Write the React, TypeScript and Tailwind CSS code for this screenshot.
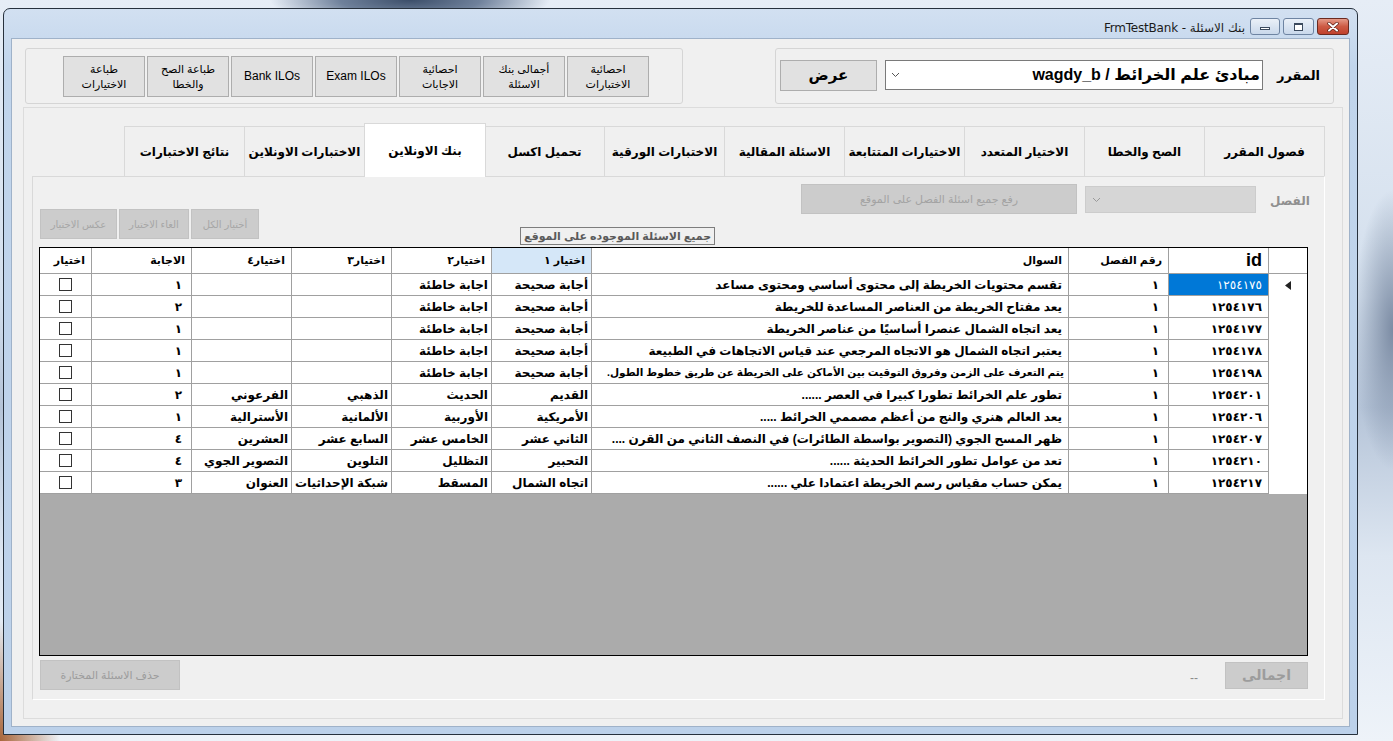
const toAr = (v: number | string) => String(v).replace(/[0-9]/g, (d) => '٠١٢٣٤٥٦٧٨٩'[Number(d)]);

type Row = { id: number; q: string; c: string[]; a: number };

const rows: Row[] = [
  { id: 1254175, q: 'تقسم محتويات الخريطة إلى محتوى أساسي ومحتوى مساعد', c: ['أجابة صحيحة', 'اجابة خاطئة', '', ''], a: 1 },
  { id: 1254176, q: 'يعد مفتاح الخريطة من العناصر المساعدة للخريطة', c: ['أجابة صحيحة', 'اجابة خاطئة', '', ''], a: 2 },
  { id: 1254177, q: 'يعد اتجاه الشمال عنصرا أساسيًا من عناصر الخريطة', c: ['أجابة صحيحة', 'اجابة خاطئة', '', ''], a: 1 },
  { id: 1254178, q: 'يعتبر اتجاه الشمال هو الاتجاه المرجعي عند قياس الاتجاهات في الطبيعة', c: ['أجابة صحيحة', 'اجابة خاطئة', '', ''], a: 1 },
  { id: 1254198, q: 'يتم التعرف على الزمن وفروق التوقيت بين الأماكن على الخريطة عن طريق خطوط الطول.', c: ['أجابة صحيحة', 'اجابة خاطئة', '', ''], a: 1 },
  { id: 1254201, q: 'تطور علم الخرائط تطورا كبيرا في العصر ......', c: ['القديم', 'الحديث', 'الذهبي', 'الفرعوني'], a: 2 },
  { id: 1254206, q: 'يعد العالم هنري والنج من أعظم مصممي الخرائط .....', c: ['الأمريكية', 'الأوربية', 'الألمانية', 'الأسترالية'], a: 1 },
  { id: 1254207, q: 'ظهر المسح الجوي (التصوير بواسطة الطائرات) في النصف الثاني من القرن ....', c: ['الثاني عشر', 'الخامس عشر', 'السابع عشر', 'العشرين'], a: 4 },
  { id: 1254210, q: 'تعد من عوامل تطور الخرائط الحديثة ......', c: ['التحبير', 'التظليل', 'التلوين', 'التصوير الجوي'], a: 4 },
  { id: 1254217, q: 'يمكن حساب مقياس رسم الخريطة اعتمادا علي ......', c: ['اتجاه الشمال', 'المسقط', 'شبكة الإحداثيات', 'العنوان'], a: 3 },
];

const tabs = [
  'فصول المقرر',
  'الصح والخطا',
  'الاختيار المتعدد',
  'الاختيارات المتتابعة',
  'الاسئلة المقالية',
  'الاختبارات الورقية',
  'تحميل اكسل',
  'بنك الاونلاين',
  'الاختبارات الاونلاين',
  'نتائج الاختبارات',
];

const topButtons: string[][] = [
  ['طباعة', 'الاختيارات'],
  ['طباعة الصح', 'والخطا'],
  ['Bank ILOs'],
  ['Exam ILOs'],
  ['احصائية', 'الاجابات'],
  ['أجمالى بنك', 'الاسئلة'],
  ['احصائية', 'الاختبارات'],
];

const headers = ['', 'id', 'رقم الفصل', 'السوال', 'اختيار ١', 'اختيار٢', 'اختيار٣', 'اختيار٤', 'الاجابة', 'اختيار'];

function Cell({ children, last, className = '' }: { children?: React.ReactNode; last?: boolean; className?: string }) {
  return (
    <div
      className={`h-[22px] border-b border-[#a0a0a0] ${last ? '' : 'border-l'} flex items-center pr-[6px] pl-[1px] overflow-hidden whitespace-nowrap font-bold text-black ${className}`}
    >
      {children}
    </div>
  );
}

export default function App() {
  return (
    <div className="w-[1393px] h-[741px] overflow-hidden pt-[8px] pl-[3px] font-['Liberation_Sans','DejaVu_Sans',sans-serif] bg-[radial-gradient(ellipse_140px_28px_at_410px_0px,#3c4e69_0%,#6f819b_50%,transparent_100%),radial-gradient(ellipse_60px_120px_at_0px_741px,#a9663a_0%,transparent_100%),radial-gradient(ellipse_40px_140px_at_1393px_330px,#7c8ca4_0%,transparent_100%),linear-gradient(180deg,#e6edf6_0%,#d3dfed_40%,#b5c4d8_55%,#dde6f1_75%,#eef3f9_100%)]">
      {/* Window */}
      <div className="w-[1355px] h-[727px] border border-[#27313d] rounded-t-[7px] flex flex-col px-[7px] bg-[linear-gradient(180deg,#d2e0f1_0%,#c1d5ec_8%,#bcd1ea_100%)]">
        {/* Title bar */}
        <div className="h-[29px] flex items-start justify-end pt-[9px] pr-[1px]">
          <span dir="rtl" className="text-[12px] text-[#1b1b1b] mt-[1px] mr-[5px] font-['DejaVu_Sans',sans-serif] tracking-[-0.2px]">
            بنك الاسئلة - FrmTestBank
          </span>
          <div className="w-[30px] h-[17px] rounded-[3px] border border-[#6e84a2] bg-[linear-gradient(180deg,#eaf0f8,#c9d8eb)] flex items-end justify-center pb-[4px]">
            <div className="w-[10px] h-[3px] bg-white border border-[#3b4a5e]" />
          </div>
          <div className="ml-[3px] w-[31px] h-[17px] rounded-[3px] border border-[#6e84a2] bg-[linear-gradient(180deg,#eaf0f8,#c9d8eb)] flex items-center justify-center">
            <div className="w-[9px] h-[8px] bg-white border border-[#3b4a5e] border-t-2" />
          </div>
          <div className="ml-[3px] w-[32px] h-[17px] rounded-[3px] border border-[#6b2a20] bg-[linear-gradient(180deg,#e59a88,#cd5a44_50%,#c0412c)] flex items-center justify-center">
            <svg width="12" height="10" viewBox="0 0 12 10">
              <path d="M2 1.5 L10 8.5 M10 1.5 L2 8.5" stroke="#5a1d14" strokeWidth="3.4" strokeLinecap="round" />
              <path d="M2 1.5 L10 8.5 M10 1.5 L2 8.5" stroke="#ffffff" strokeWidth="2" strokeLinecap="round" />
            </svg>
          </div>
        </div>

        {/* Client area */}
        <div className="w-[1339px] h-[689px] bg-[#f0f0f0] border border-[#9fb2c9] flex flex-col">
          {/* Top row */}
          <div className="mt-[9px] h-[56px] flex">
            <div className="ml-[13px] w-[658px] h-[56px] border border-[#d5d5d5] rounded-[3px] flex items-start pt-[7px] pl-[37px] gap-[2px]">
              {topButtons.map((lines, i) => (
                <div
                  key={i}
                  dir="rtl"
                  className="w-[82px] h-[41px] bg-[#e1e1e1] border border-[#adadad] flex flex-col items-center justify-center text-[11px] leading-[15px] text-black"
                >
                  {lines.map((l, j) => (
                    <span key={j} className={lines.length === 1 ? 'text-[12px]' : ''}>
                      {l}
                    </span>
                  ))}
                </div>
              ))}
            </div>
            <div className="ml-[92px] w-[559px] h-[56px] border border-[#d5d5d5] rounded-[3px] flex items-start pt-[11px] pl-[4px]">
              <div className="w-[97px] h-[31px] bg-[#e1e1e1] border border-[#adadad] flex items-center justify-center text-[15px] font-bold text-black">
                عرض
              </div>
              <div className="ml-[8px] w-[378px] h-[30px] bg-white border border-[#7a7a7a] flex items-center">
                <svg className="ml-[5px] shrink-0" width="9" height="6" viewBox="0 0 9 6">
                  <path d="M1 1 L4.5 4.5 L8 1" fill="none" stroke="#555" strokeWidth="1" />
                </svg>
                <span dir="rtl" className="flex-1 text-right pr-[2px] text-[16px] font-bold text-black whitespace-nowrap">
                  مبادئ علم الخرائط / wagdy_b
                </span>
              </div>
              <span className="ml-[14px] mt-[6px] text-[13px] font-bold text-black">المقرر</span>
            </div>
          </div>

          {/* Outer panel */}
          <div className="mt-[3px] ml-[11px] w-[1320px] h-[612px] border border-[#dcdcdc] pt-[15px] pl-[8px]">
            {/* Tab strip */}
            <div dir="rtl" className="w-[1293px] h-[53px] flex items-end">
              {tabs.map((t, i) =>
                i === 7 ? (
                  <div
                    key={t}
                    className="relative z-10 -mx-px -mb-px w-[122px] h-[54px] bg-white border border-b-0 border-[#d9d9d9] flex items-center justify-center text-[12px] font-bold text-black whitespace-nowrap"
                  >
                    {t}
                  </div>
                ) : (
                  <div
                    key={t}
                    className="w-[120px] h-[50px] bg-[#f0f0f0] border border-b-0 border-l-0 border-[#d9d9d9] flex items-center justify-center text-[12px] font-bold text-black whitespace-nowrap"
                  >
                    {t}
                  </div>
                )
              )}
              <div className="w-px h-[50px] bg-[#d9d9d9]" />
            </div>

            {/* Tab body */}
            <div className="w-[1293px] h-[524px] bg-[#f0f0f0] border border-[#d9d9d9] border-b-white border-r-white flex flex-col">
              {/* Top controls */}
              <div className="h-[70px] flex items-start">
                <div className="ml-[7px] mt-[32px] flex gap-[2px]">
                  {['عكس الاختيار', 'الغاء الاختيار', 'أختيار الكل'].map((b, i) => (
                    <div
                      key={b}
                      className={`${i === 0 ? 'w-[77px]' : i === 1 ? 'w-[70px]' : 'w-[68px]'} h-[30px] bg-[#cccccc] border border-[#c2c2c2] flex items-center justify-center text-[10px] text-[#a6a6a6] whitespace-nowrap`}
                    >
                      {b}
                    </div>
                  ))}
                </div>
                <div className="ml-[261px] mt-[50px] w-[195px] h-[18px] border border-[#7d7d7d] flex items-center justify-center text-[11px] font-bold text-[#5a5a5a] whitespace-nowrap overflow-hidden">
                  جميع الاسئلة الموجوده على الموقع
                </div>
                <div className="ml-[86px] mt-[7px] w-[276px] h-[30px] bg-[#cccccc] border border-[#c2c2c2] flex items-center justify-center text-[11px] text-[#a3a3a3]">
                  رفع جميع اسئلة الفصل على الموقع
                </div>
                <div className="ml-[8px] mt-[9px] w-[171px] h-[27px] bg-[#d6d6d6] border border-[#cccccc] flex items-center">
                  <svg className="ml-[6px]" width="9" height="6" viewBox="0 0 9 6">
                    <path d="M1 1 L4.5 4.5 L8 1" fill="none" stroke="#9a9a9a" strokeWidth="1" />
                  </svg>
                </div>
                <span className="ml-[14px] mt-[15px] text-[12px] font-bold text-[#8f8f8f]">الفصل</span>
              </div>

              {/* Grid */}
              <div className="ml-[6px] w-[1269px] h-[409px] border border-black bg-[#ababab] overflow-hidden">
                <div dir="rtl" className="grid grid-cols-[39px_100px_100px_477px_100px_100px_100px_100px_100px_51px] bg-white">
                  {headers.map((h, i) => (
                    <div
                      key={i}
                      className={`h-[26px] border-b border-[#a0a0a0] ${i === 9 ? '' : 'border-l'} ${i === 4 ? 'bg-[#d5e7f8]' : 'bg-white'} flex items-center pr-[6px] whitespace-nowrap text-black ${i === 1 ? 'text-[18px] font-bold' : 'text-[11px] font-bold'}`}
                    >
                      {h}
                    </div>
                  ))}
                  {rows.map((r, ri) => (
                    <div key={r.id} className="contents">
                      <div className="h-[22px] border-l border-[#a0a0a0] flex items-center justify-center">
                        {ri === 0 && (
                          <svg width="6" height="9" viewBox="0 0 6 9">
                            <path d="M6 0 L0 4.5 L6 9 Z" fill="#222" />
                          </svg>
                        )}
                      </div>
                      <Cell className={ri === 0 ? 'text-[12px] bg-[#0078d7] !text-white !font-normal' : 'text-[12px]'}>{toAr(r.id)}</Cell>
                      <Cell className="text-[12px] !pr-[9px]">{toAr(1)}</Cell>
                      <Cell className={r.q.length > 75 ? 'text-[10.5px] !pr-[4px]' : 'text-[12px]'}>{r.q}</Cell>
                      {r.c.map((c, ci) => (
                        <Cell key={ci} className="text-[12px] !pr-[3px]">
                          {c}
                        </Cell>
                      ))}
                      <Cell className="text-[12px] !pr-[9px]">{toAr(r.a)}</Cell>
                      <Cell last className="justify-center !pr-0 !pl-0">
                        <div className="w-[13px] h-[13px] border border-[#333333] bg-white" />
                      </Cell>
                    </div>
                  ))}
                </div>
              </div>

              {/* Bottom controls */}
              <div className="mt-[4px] flex items-start">
                <div className="ml-[7px] w-[140px] h-[30px] bg-[#cccccc] border border-[#c2c2c2] flex items-center justify-center text-[11px] text-[#9c9c9c]">
                  حذف الاسئلة المختارة
                </div>
                <span className="ml-auto mt-[9px] text-[12px] text-[#8a8a8a]">--</span>
                <div className="ml-[27px] mr-[16px] mt-[2px] w-[83px] h-[27px] bg-[#cccccc] border border-[#c2c2c2] flex items-center justify-center text-[14px] font-bold text-[#9c9c9c]">
                  اجمالى
                </div>
              </div>
            </div>
          </div>
        </div>
      </div>
    </div>
  );
}
